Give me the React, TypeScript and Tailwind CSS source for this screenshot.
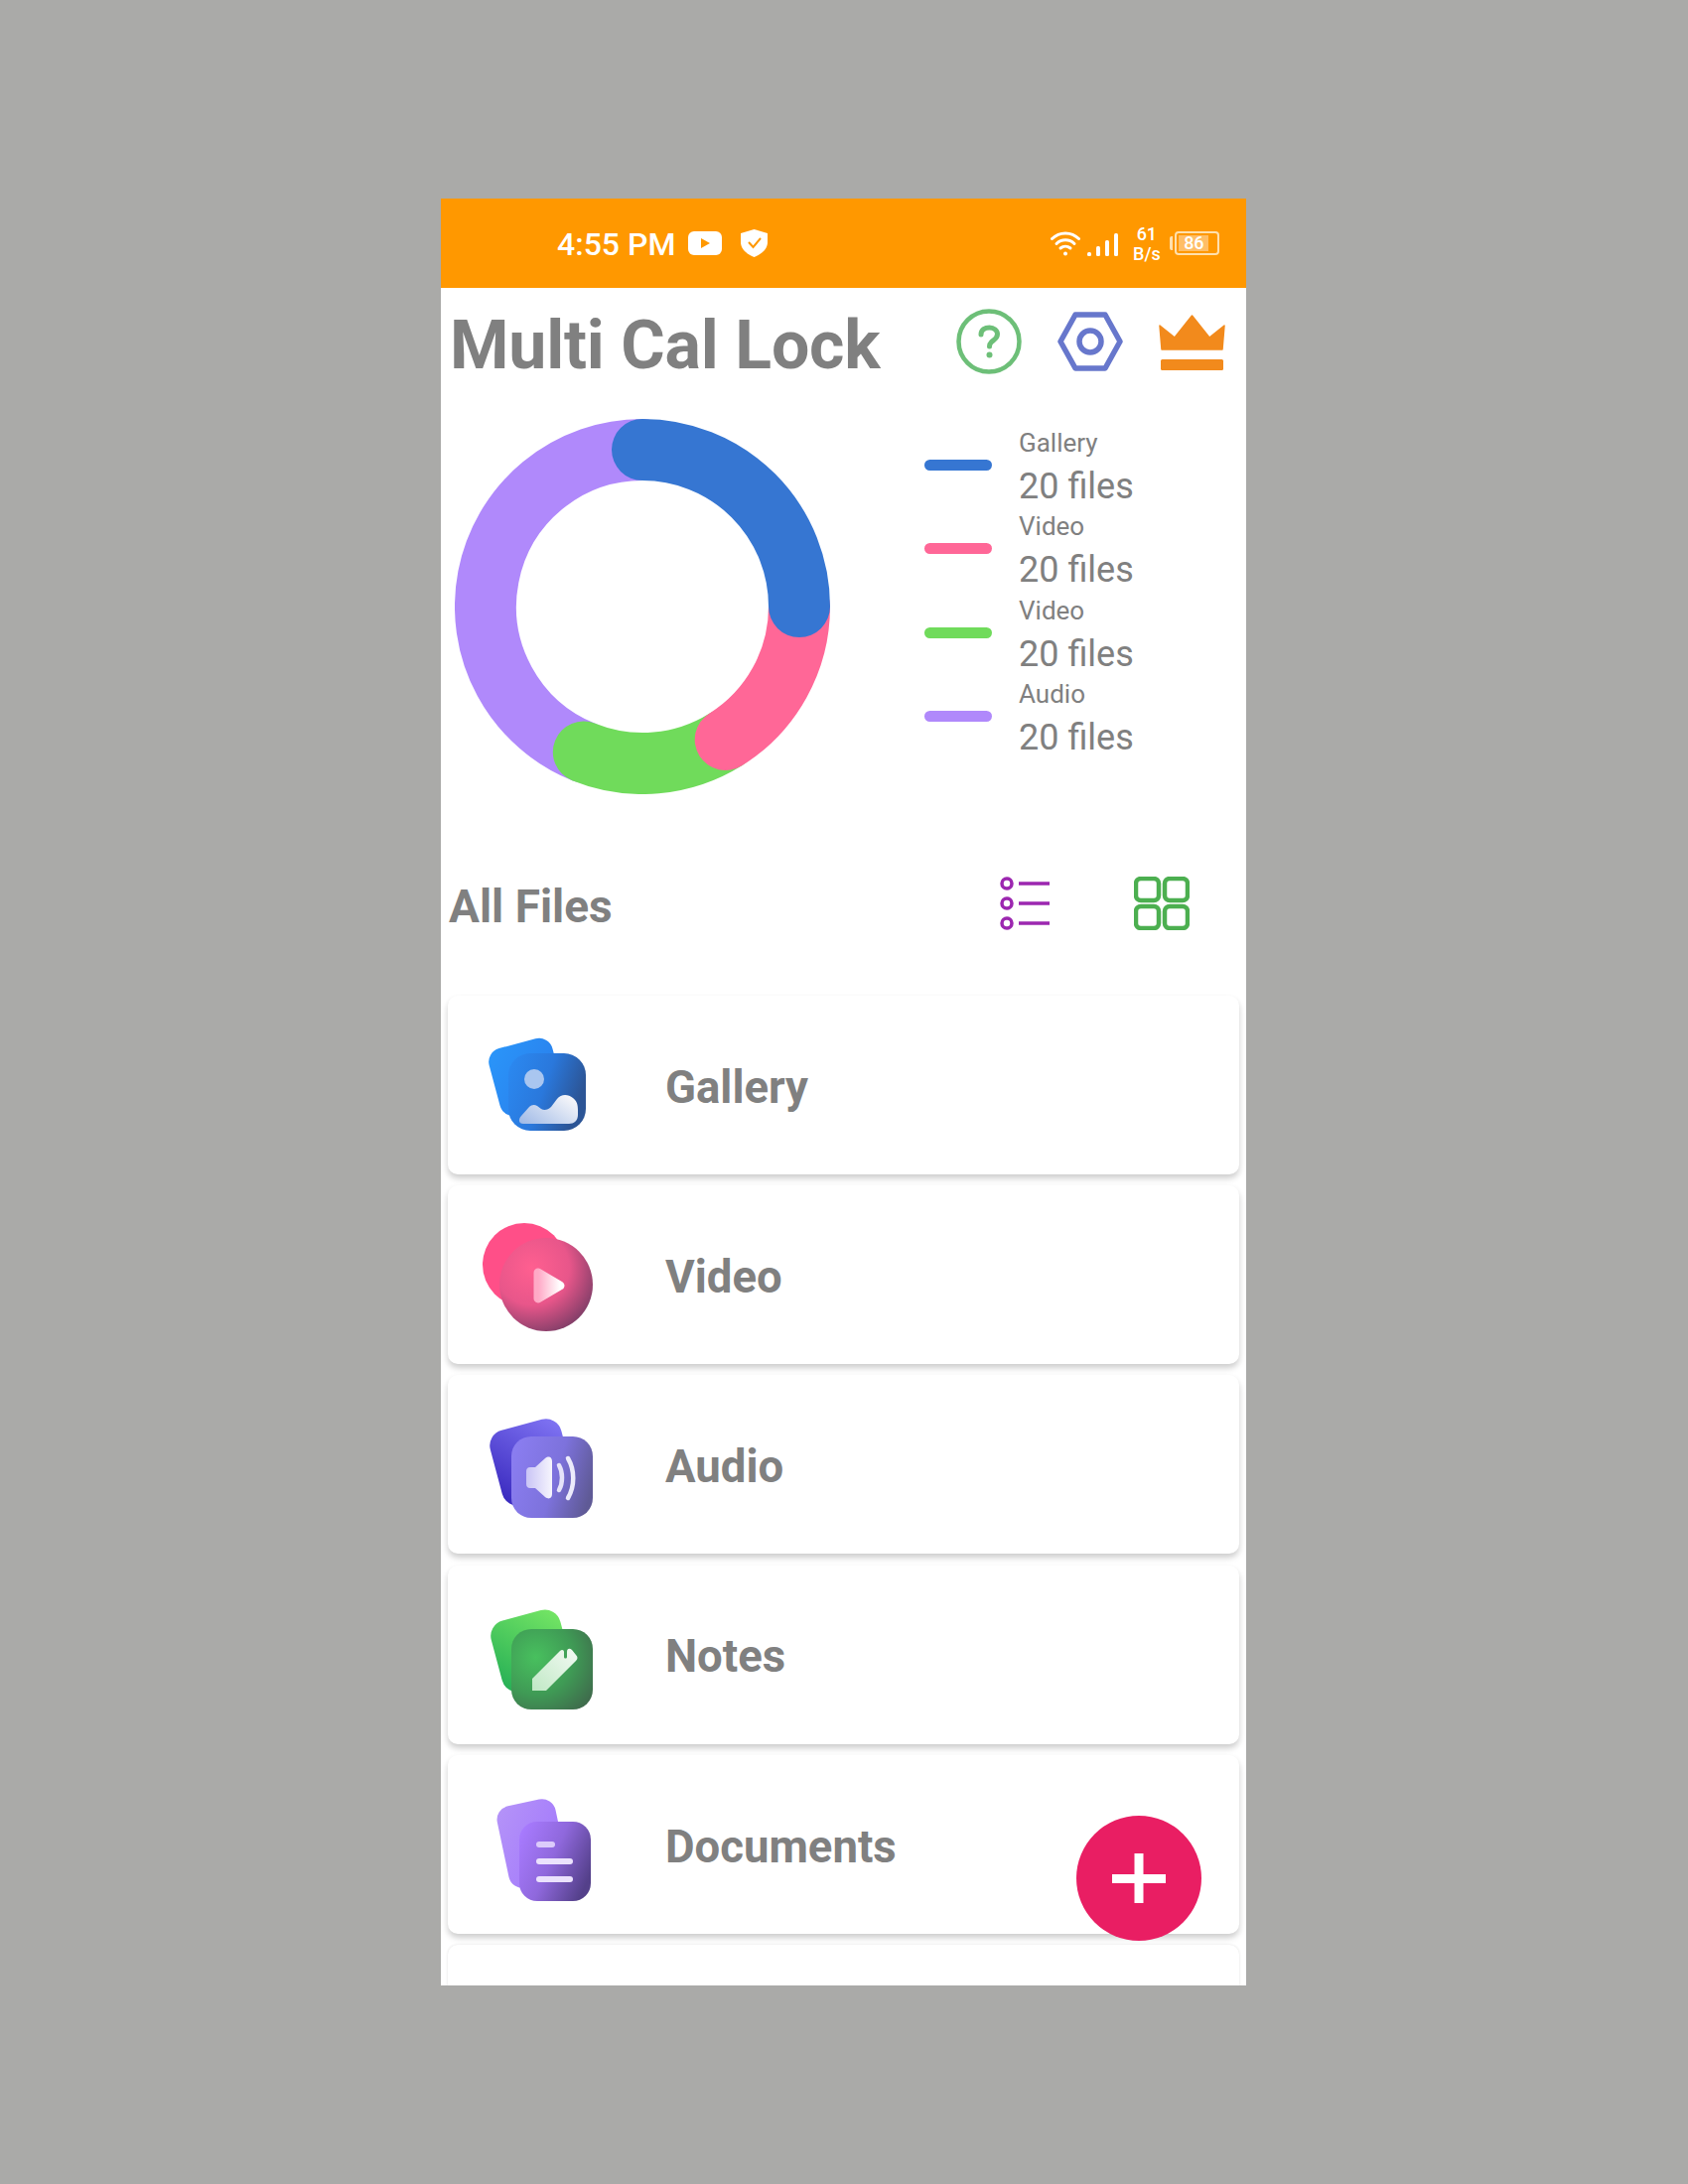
const font = "font-['Roboto',sans-serif]";

// point on the donut, angle in degrees clockwise from 12 o'clock
function arc(from: number, to: number) {
  const r = 158;
  const pt = (a: number) => {
    const rad = ((a - 90) * Math.PI) / 180;
    return `${(189 + r * Math.cos(rad)).toFixed(2)} ${(189 + r * Math.sin(rad)).toFixed(2)}`;
  };
  const large = to - from > 180 ? 1 : 0;
  return `M${pt(from)} A${r} ${r} 0 ${large} 1 ${pt(to)}`;
}

function Donut() {
  return (
    <svg width="378" height="378" viewBox="0 0 378 378" fill="none" strokeWidth="62" strokeLinecap="round">
      <path d={arc(202, 359.9)} stroke="#b089fb" />
      <path d={arc(148, 202)} stroke="#70db5b" />
      <path d={arc(90, 148)} stroke="#ff6797" />
      <path d={arc(0, 90)} stroke="#3676d2" />
    </svg>
  );
}

function GalleryIcon() {
  return (
    <svg width="120" height="120" viewBox="0 0 120 120">
      <defs>
        <linearGradient id="gb" x1="0" y1="0" x2="1" y2="1">
          <stop offset="0" stopColor="#2a96fa" />
          <stop offset="1" stopColor="#2a7ae8" />
        </linearGradient>
        <linearGradient id="gf" x1="0" y1="0" x2="1" y2="0.35">
          <stop offset="0" stopColor="#2b8af2" />
          <stop offset="0.55" stopColor="#2a78dc" />
          <stop offset="1" stopColor="#2c5596" />
        </linearGradient>
        <linearGradient id="gm" x1="0" y1="1" x2="1" y2="0.3">
          <stop offset="0" stopColor="#9db8e6" />
          <stop offset="1" stopColor="#f4f5f9" />
        </linearGradient>
      </defs>
      <rect x="17" y="17" width="66" height="70" rx="14" fill="url(#gb)" transform="rotate(-15 50 52)" />
      <rect x="32" y="28" width="78" height="78" rx="22" fill="url(#gf)" />
      <circle cx="58" cy="54" r="10" fill="#a9c6f0" />
      <path d="M47 99C42 99 42 94 45 91L53 82C55 80 58 79 61 81L65 84C68 86 72 85 75 82L81 74C85 69 92 69 97 73C101 76 102 80 102 85L102 90C102 96 98 99 93 99Z" fill="url(#gm)" />
    </svg>
  );
}

function VideoIcon() {
  return (
    <svg width="120" height="120" viewBox="0 0 120 120">
      <defs>
        <radialGradient id="vf" cx="0.35" cy="0.32" r="0.8">
          <stop offset="0" stopColor="#ff5f90" />
          <stop offset="0.5" stopColor="#e8568a" />
          <stop offset="1" stopColor="#6f3a62" />
        </radialGradient>
        <linearGradient id="vp" x1="1" y1="0.5" x2="0" y2="0.5">
          <stop offset="0" stopColor="#fff" />
          <stop offset="1" stopColor="#ffa9c6" />
        </linearGradient>
      </defs>
      <circle cx="48" cy="50" r="42" fill="#ff4f88" />
      <circle cx="70" cy="70" r="47" fill="url(#vf)" />
      <path d="M62 58L84 71L62 84Z" fill="url(#vp)" stroke="url(#vp)" strokeWidth="9" strokeLinejoin="round" />
    </svg>
  );
}

function AudioIcon() {
  return (
    <svg width="120" height="120" viewBox="0 0 120 120">
      <defs>
        <linearGradient id="ab" x1="0" y1="1" x2="1" y2="0">
          <stop offset="0" stopColor="#3626bc" />
          <stop offset="1" stopColor="#8377f5" />
        </linearGradient>
        <linearGradient id="af" x1="0" y1="0.3" x2="1" y2="0.6">
          <stop offset="0" stopColor="#8a7df0" />
          <stop offset="0.55" stopColor="#7d72dc" />
          <stop offset="1" stopColor="#5f5a96" />
        </linearGradient>
        <linearGradient id="as" x1="0" y1="0" x2="1" y2="0">
          <stop offset="0" stopColor="#c9c4f6" />
          <stop offset="1" stopColor="#f6f5fd" />
        </linearGradient>
      </defs>
      <rect x="18" y="19" width="74" height="78" rx="16" fill="url(#ab)" transform="rotate(-15 55 56)" />
      <rect x="35" y="32" width="82" height="82" rx="20" fill="url(#af)" />
      <path d="M54 63H59L69 54C73 51 76 53 76 57V90C76 94 73 96 69 93L59 84H54C51 84 50 82 50 80V67C50 65 51 63 54 63Z" fill="url(#as)" />
      <path d="M83 61C87 68 87 79 83 86" fill="none" stroke="#e6e3f9" strokeWidth="4.500" strokeLinecap="round" />
      <path d="M92 54C99 66 99 82 92 94" fill="none" stroke="#ecebfb" strokeWidth="4.500" strokeLinecap="round" />
    </svg>
  );
}

function NotesIcon() {
  return (
    <svg width="120" height="120" viewBox="0 0 120 120">
      <defs>
        <linearGradient id="nb" x1="0" y1="1" x2="1" y2="0">
          <stop offset="0" stopColor="#22ac55" />
          <stop offset="1" stopColor="#78e865" />
        </linearGradient>
        <radialGradient id="nf" cx="0.3" cy="0.35" r="0.85">
          <stop offset="0" stopColor="#48c05e" />
          <stop offset="0.55" stopColor="#3f9a55" />
          <stop offset="1" stopColor="#3f6a4c" />
        </radialGradient>
        <linearGradient id="np" x1="0" y1="1" x2="1" y2="0">
          <stop offset="0" stopColor="#bfe8c4" />
          <stop offset="1" stopColor="#f4faf4" />
        </linearGradient>
      </defs>
      <rect x="19" y="19" width="72" height="74" rx="16" fill="url(#nb)" transform="rotate(-15 55 56)" />
      <rect x="35" y="34" width="82" height="81" rx="20" fill="url(#nf)" />
      <path d="M56 96V84L84 56C86 54 88 55 88 57V62C88 64 91 64 91 62V57C91 53 94 53 96 55L100 60C102 62 102 64 100 66L70 96Z" fill="url(#np)" />
    </svg>
  );
}

function DocumentsIcon() {
  return (
    <svg width="120" height="120" viewBox="0 0 120 120">
      <defs>
        <linearGradient id="db" x1="0" y1="0" x2="1" y2="1">
          <stop offset="0" stopColor="#b594f8" />
          <stop offset="1" stopColor="#9f73fc" />
        </linearGradient>
        <linearGradient id="df" x1="0" y1="0.15" x2="1" y2="0.65">
          <stop offset="0" stopColor="#a87bff" />
          <stop offset="0.5" stopColor="#8f68dc" />
          <stop offset="1" stopColor="#54408a" />
        </linearGradient>
      </defs>
      <rect x="26" y="17" width="60" height="84" rx="14" fill="url(#db)" transform="rotate(-12 56 59)" />
      <rect x="43" y="37" width="72" height="80" rx="18" fill="url(#df)" />
      <rect x="60" y="57" width="19" height="6" rx="3" fill="#dccbfb" />
      <rect x="60" y="74" width="37" height="6" rx="3" fill="#ebe2fd" />
      <rect x="60" y="92" width="37" height="6" rx="3" fill="#ebe2fd" />
    </svg>
  );
}

const legend = [
  { name: "Gallery", bar: "bg-[#3676d2]" },
  { name: "Video", bar: "bg-[#ff6797]" },
  { name: "Video", bar: "bg-[#70db5b]" },
  { name: "Audio", bar: "bg-[#b089fb]" },
];

const files = [
  { name: "Gallery", icon: <GalleryIcon /> },
  { name: "Video", icon: <VideoIcon /> },
  { name: "Audio", icon: <AudioIcon /> },
  { name: "Notes", icon: <NotesIcon /> },
  { name: "Documents", icon: <DocumentsIcon /> },
];

function StatusBar() {
  return (
    <div className="flex h-[90px] shrink-0 items-center bg-[#ff9800] pl-[117px] text-white">
      <span className="mt-[2px] text-[32px] font-medium leading-none">4:55 PM</span>
      <svg className="ml-[13px]" width="34" height="24" viewBox="0 0 34 24">
        <rect width="34" height="24" rx="6" fill="#fff" />
        <path d="M13 7L22 12L13 17Z" fill="#ff9800" />
      </svg>
      <svg className="ml-[19px]" width="27" height="28" viewBox="0 0 27 28">
        <path d="M13.5 0L27 4V13C27 20 21 25 13.5 28C6 25 0 20 0 13V4Z" fill="#fff" />
        <path d="M8 13L12.5 18L20 9" fill="none" stroke="#ff9800" strokeWidth="2" />
      </svg>
      <svg className="ml-[285px]" width="30" height="26" viewBox="0 0 30 26" fill="none" stroke="#fff" strokeWidth="3" strokeLinecap="round">
        <path d="M1.5 8.5C9 1 21 1 28.5 8.5" />
        <path d="M6 13.5C11 8.5 19 8.5 24 13.5" />
        <path d="M10 18C13 15.5 17 15.5 20 18" />
        <circle cx="15" cy="23.5" r="2" fill="#fff" stroke="none" />
      </svg>
      <svg className="ml-[7px] mt-[3px]" width="32" height="23" viewBox="0 0 32 23" fill="#fff">
        <rect x="0" y="19" width="4" height="4" rx="1.5" />
        <rect x="9" y="13" width="4" height="10" rx="1.5" />
        <rect x="18" y="7" width="4" height="16" rx="1.5" />
        <rect x="27" y="0" width="4" height="23" rx="1.5" />
      </svg>
      <div className="ml-[14px] flex w-[27px] flex-col items-center gap-[3px] text-[18px] font-medium leading-[17px]">
        <span>61</span>
        <span>B/s</span>
      </div>
      <div className="ml-[10px] flex items-center">
        <div className="h-[14px] w-[3px] rounded-l-[2px] bg-[#ffe0ae]" />
        <div className="ml-[2px] flex h-[24px] w-[45px] items-center rounded-[4px] border-2 border-[#ffe0ae] p-[2px]">
          <div className="flex h-full w-[30px] items-center justify-center bg-[#ffbe66] text-[18px] font-medium leading-none">86</div>
        </div>
      </div>
    </div>
  );
}

function Header() {
  return (
    <div className="flex h-[110px] shrink-0 items-center pl-[9px]">
      <h1 className="mt-[6px] w-[510px] text-[68px] font-bold leading-none tracking-[-0.2px] text-[#808080]">Multi Cal Lock</h1>
      <svg className="mb-[2px]" width="66" height="66" viewBox="0 0 66 66" fill="none" stroke="#6dbf78">
        <circle cx="33" cy="33" r="30.5" strokeWidth="4.5" />
        <path d="M25 26C25 21 29 19 33.500 19C38 19 41.500 22 41.500 25.500C41.500 30 38 31 35.500 33.500C34 35 33.500 36.500 33.500 38" strokeWidth="5" strokeLinecap="round" />
        <circle cx="33.500" cy="46.500" r="3" fill="#6dbf78" stroke="none" />
      </svg>
      <svg className="mb-[2px] ml-[36px]" width="66" height="60" viewBox="0 0 66 60" fill="none" stroke="#6777cc" strokeWidth="5.500" strokeLinejoin="round">
        <path d="M18 3H48L63 30L48 57H18L3 30Z" />
        <circle cx="33" cy="30" r="11" />
      </svg>
      <svg className="ml-[36px]" width="67" height="56" viewBox="0 0 67 56" fill="#f28a1c" stroke="#f28a1c" strokeLinejoin="round">
        <path d="M1 11L16 23L33.500 1L51 23L66 11L64 35H3Z" strokeWidth="1.500" />
        <rect x="2" y="45" width="63" height="11" rx="1.500" stroke="none" />
      </svg>
    </div>
  );
}

function Chart() {
  return (
    <div className="flex shrink-0 pb-[60px] pl-[14px] pt-[22px]">
      <Donut />
      <div className="ml-[95px] flex flex-col pt-[6px]">
        {legend.map((item, i) => (
          <div key={i} className="flex h-[84.3px] items-center">
            <div className={`mb-[3px] h-[11px] w-[68px] rounded-full ${item.bar}`} />
            <div className="ml-[27px] mt-[2px] flex flex-col gap-[4px] text-[#808080]">
              <span className="text-[26px] leading-[34px]">{item.name}</span>
              <span className="text-[36px] leading-[46px]">20 files</span>
            </div>
          </div>
        ))}
      </div>
    </div>
  );
}

function FilesHeader() {
  return (
    <div className="flex h-[100px] shrink-0 items-center pl-[8px]">
      <h2 className="mt-[6px] w-[554px] text-[46px] font-bold leading-none text-[#808080]">All Files</h2>
      <svg width="52" height="54" viewBox="0 0 52 54" fill="none" stroke="#9c27b0" strokeWidth="3.500">
        <circle cx="8" cy="7" r="5" strokeWidth="3.500" />
        <circle cx="8" cy="27" r="5" strokeWidth="3.500" />
        <circle cx="8" cy="47" r="5" strokeWidth="3.500" />
        <path d="M20 7H51M20 27H51M20 47H51" />
      </svg>
      <svg className="ml-[84px]" width="56" height="54" viewBox="0 0 56 54" fill="none" stroke="#4caf50" strokeWidth="4.500">
        <rect x="2" y="2" width="23" height="22" rx="5" />
        <rect x="31" y="2" width="23" height="22" rx="5" />
        <rect x="2" y="30" width="23" height="22" rx="5" />
        <rect x="31" y="30" width="23" height="22" rx="5" />
      </svg>
    </div>
  );
}

export default function App() {
  return (
    <div className={`min-h-[2200px] bg-[#aaaaa8] pl-[444px] pt-[200px] ${font}`}>
      <div className="relative flex h-[1800px] w-[811px] flex-col overflow-hidden bg-white">
        <StatusBar />
        <Header />
        <Chart />
        <FilesHeader />
        <div className="flex flex-col gap-[11.2px] pl-[7px] pr-[7px] pt-[43px]">
          {files.map((f) => (
            <div key={f.name} className="flex h-[180px] shrink-0 items-center rounded-[10px] bg-white pl-[29px] shadow-[0_4px_6px_rgba(0,0,0,0.2)]">
              {f.icon}
              <span className="ml-[70px] mt-[5px] text-[45.5px] font-bold leading-none text-[#808080]">{f.name}</span>
            </div>
          ))}
          <div className="h-[180px] shrink-0 rounded-[10px] bg-white shadow-[0_0_3px_rgba(0,0,0,0.12)]" />
        </div>
        <button className="absolute left-[640px] top-[1629px] flex h-[126px] w-[126px] items-center justify-center rounded-full bg-[#e91e63]">
          <svg width="54" height="50" viewBox="0 0 54 50" fill="#fff">
            <rect x="0" y="21" width="54" height="9" />
            <rect x="22.500" y="0" width="9" height="50" />
          </svg>
        </button>
      </div>
    </div>
  );
}
